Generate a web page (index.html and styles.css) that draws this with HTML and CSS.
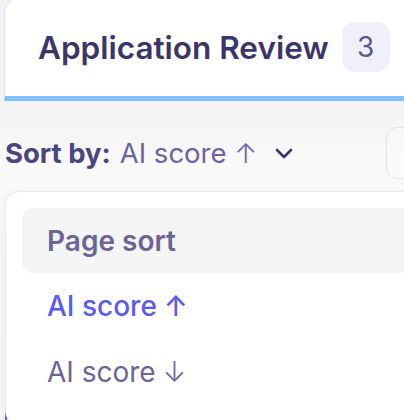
FILE: index.html
```html
<!DOCTYPE html>
<html>
<head>
<meta charset="utf-8">
<link rel="stylesheet" href="styles.css">
</head>
<body>
<div class="page">
  <div class="tab">
    <h1 class="tab-title">Application Review</h1>
    <span class="badge">3</span>
  </div>
  <div class="toolbar">
    <div class="sort">
      <span class="sort-label">Sort by:</span>
      <span class="sort-value">AI score <span class="arrow">↑</span></span>
      <svg class="chevron" width="18" height="11" viewBox="0 0 18 11"><path d="M2 2 L9 9 L16 2" fill="none" stroke="#3a356b" stroke-width="2.6" stroke-linecap="round" stroke-linejoin="round"/></svg>
    </div>
    <div class="tool-btn"></div>
  </div>
  <div class="menu-wrap">
    <div class="behind-card"></div>
    <div class="menu">
      <div class="menu-head">Page sort</div>
      <div class="menu-item active">AI score <span class="arrow">↑</span></div>
      <div class="menu-item">AI score <span class="arrow">↓</span></div>
    </div>
  </div>
</div>
</body>
</html>
```
FILE: styles.css
```css
html, body {
  margin: 0;
  padding: 0;
  background: #ffffff;
  overflow: hidden;
  width: 404px;
  height: 420px;
}
body {
  font-family: Inter, "Noto Sans", sans-serif;
}
.page {
  width: 404px;
  height: 420px;
  overflow: hidden;
  background: linear-gradient(#f2f2f2 100px, #f9f9f9 160px, #f6f6f6 420px);
  position: relative;
}
.tab {
  margin-left: 4px;
  margin-top: -3px;
  width: 460px;
  height: 104px;
  box-sizing: border-box;
  background: #ffffff;
  border-left: 1.5px solid #e3e1f0;
  border-top: 1.5px solid #e3e1f0;
  border-top-left-radius: 16px;
  border-bottom: 5px solid #80bff9;
  display: flex;
  align-items: center;
  padding-left: 33px;
  gap: 13px;
}
.tab-title {
  margin: 0;
  font-size: 31.5px;
  font-weight: 600;
  color: #3a356b;
}
.badge {
  width: 48px;
  height: 50px;
  border-radius: 13px;
  background: #f1f0f8;
  color: #5a5796;
  font-size: 28px;
  display: flex;
  align-items: center;
  justify-content: center;
}
.toolbar {
  display: flex;
  align-items: center;
  justify-content: space-between;
  padding: 26px 0 12px 5px;
}
.sort {
  display: flex;
  align-items: center;
  font-size: 27.5px;
}
.sort-label {
  font-weight: 700;
  color: #4a4580;
  margin-right: 9px;
}
.sort-value {
  color: #6a64a0;
  font-weight: 400;
}
.arrow {
  font-weight: 300;
}
.chevron {
  margin-left: 18px;
  margin-top: 1px;
}
.tool-btn {
  width: 60px;
  height: 52px;
  box-sizing: border-box;
  border: 1.5px solid #e4e2f0;
  border-radius: 11px;
  margin-right: -42px;
  background: linear-gradient(#f7f7f7, #fbfbfb);
}
.menu-wrap {
  position: relative;
}
.behind-card {
  position: absolute;
  left: 4.5px;
  top: 212px;
  width: 2px;
  height: 60px;
  background: #5b5cf6;
}
.menu {
  position: relative;
  margin-left: 5px;
  width: 460px;
  height: 234px;
  box-sizing: border-box;
  background: #ffffff;
  border: 1px solid #e8e8e8;
  border-radius: 14px;
  box-shadow: 0 2px 8px rgba(0, 0, 0, 0.06);
  padding: 16px 0 0 16px;
}
.menu-head {
  height: 65px;
  background: #f4f5f5;
  border-radius: 10px;
  padding-left: 25px;
  display: flex;
  align-items: center;
  font-size: 28px;
  font-weight: 600;
  color: #6b6499;
}
.menu-item {
  height: 66px;
  padding-left: 25px;
  display: flex;
  align-items: center;
  font-size: 28px;
  color: #6b6499;
}
.menu-item .arrow {
  margin-left: 0.25em;
}
.menu-item.active {
  color: #5a5cf0;
  font-weight: 500;
}
.menu-item.active .arrow {
  font-weight: 500;
}
```
